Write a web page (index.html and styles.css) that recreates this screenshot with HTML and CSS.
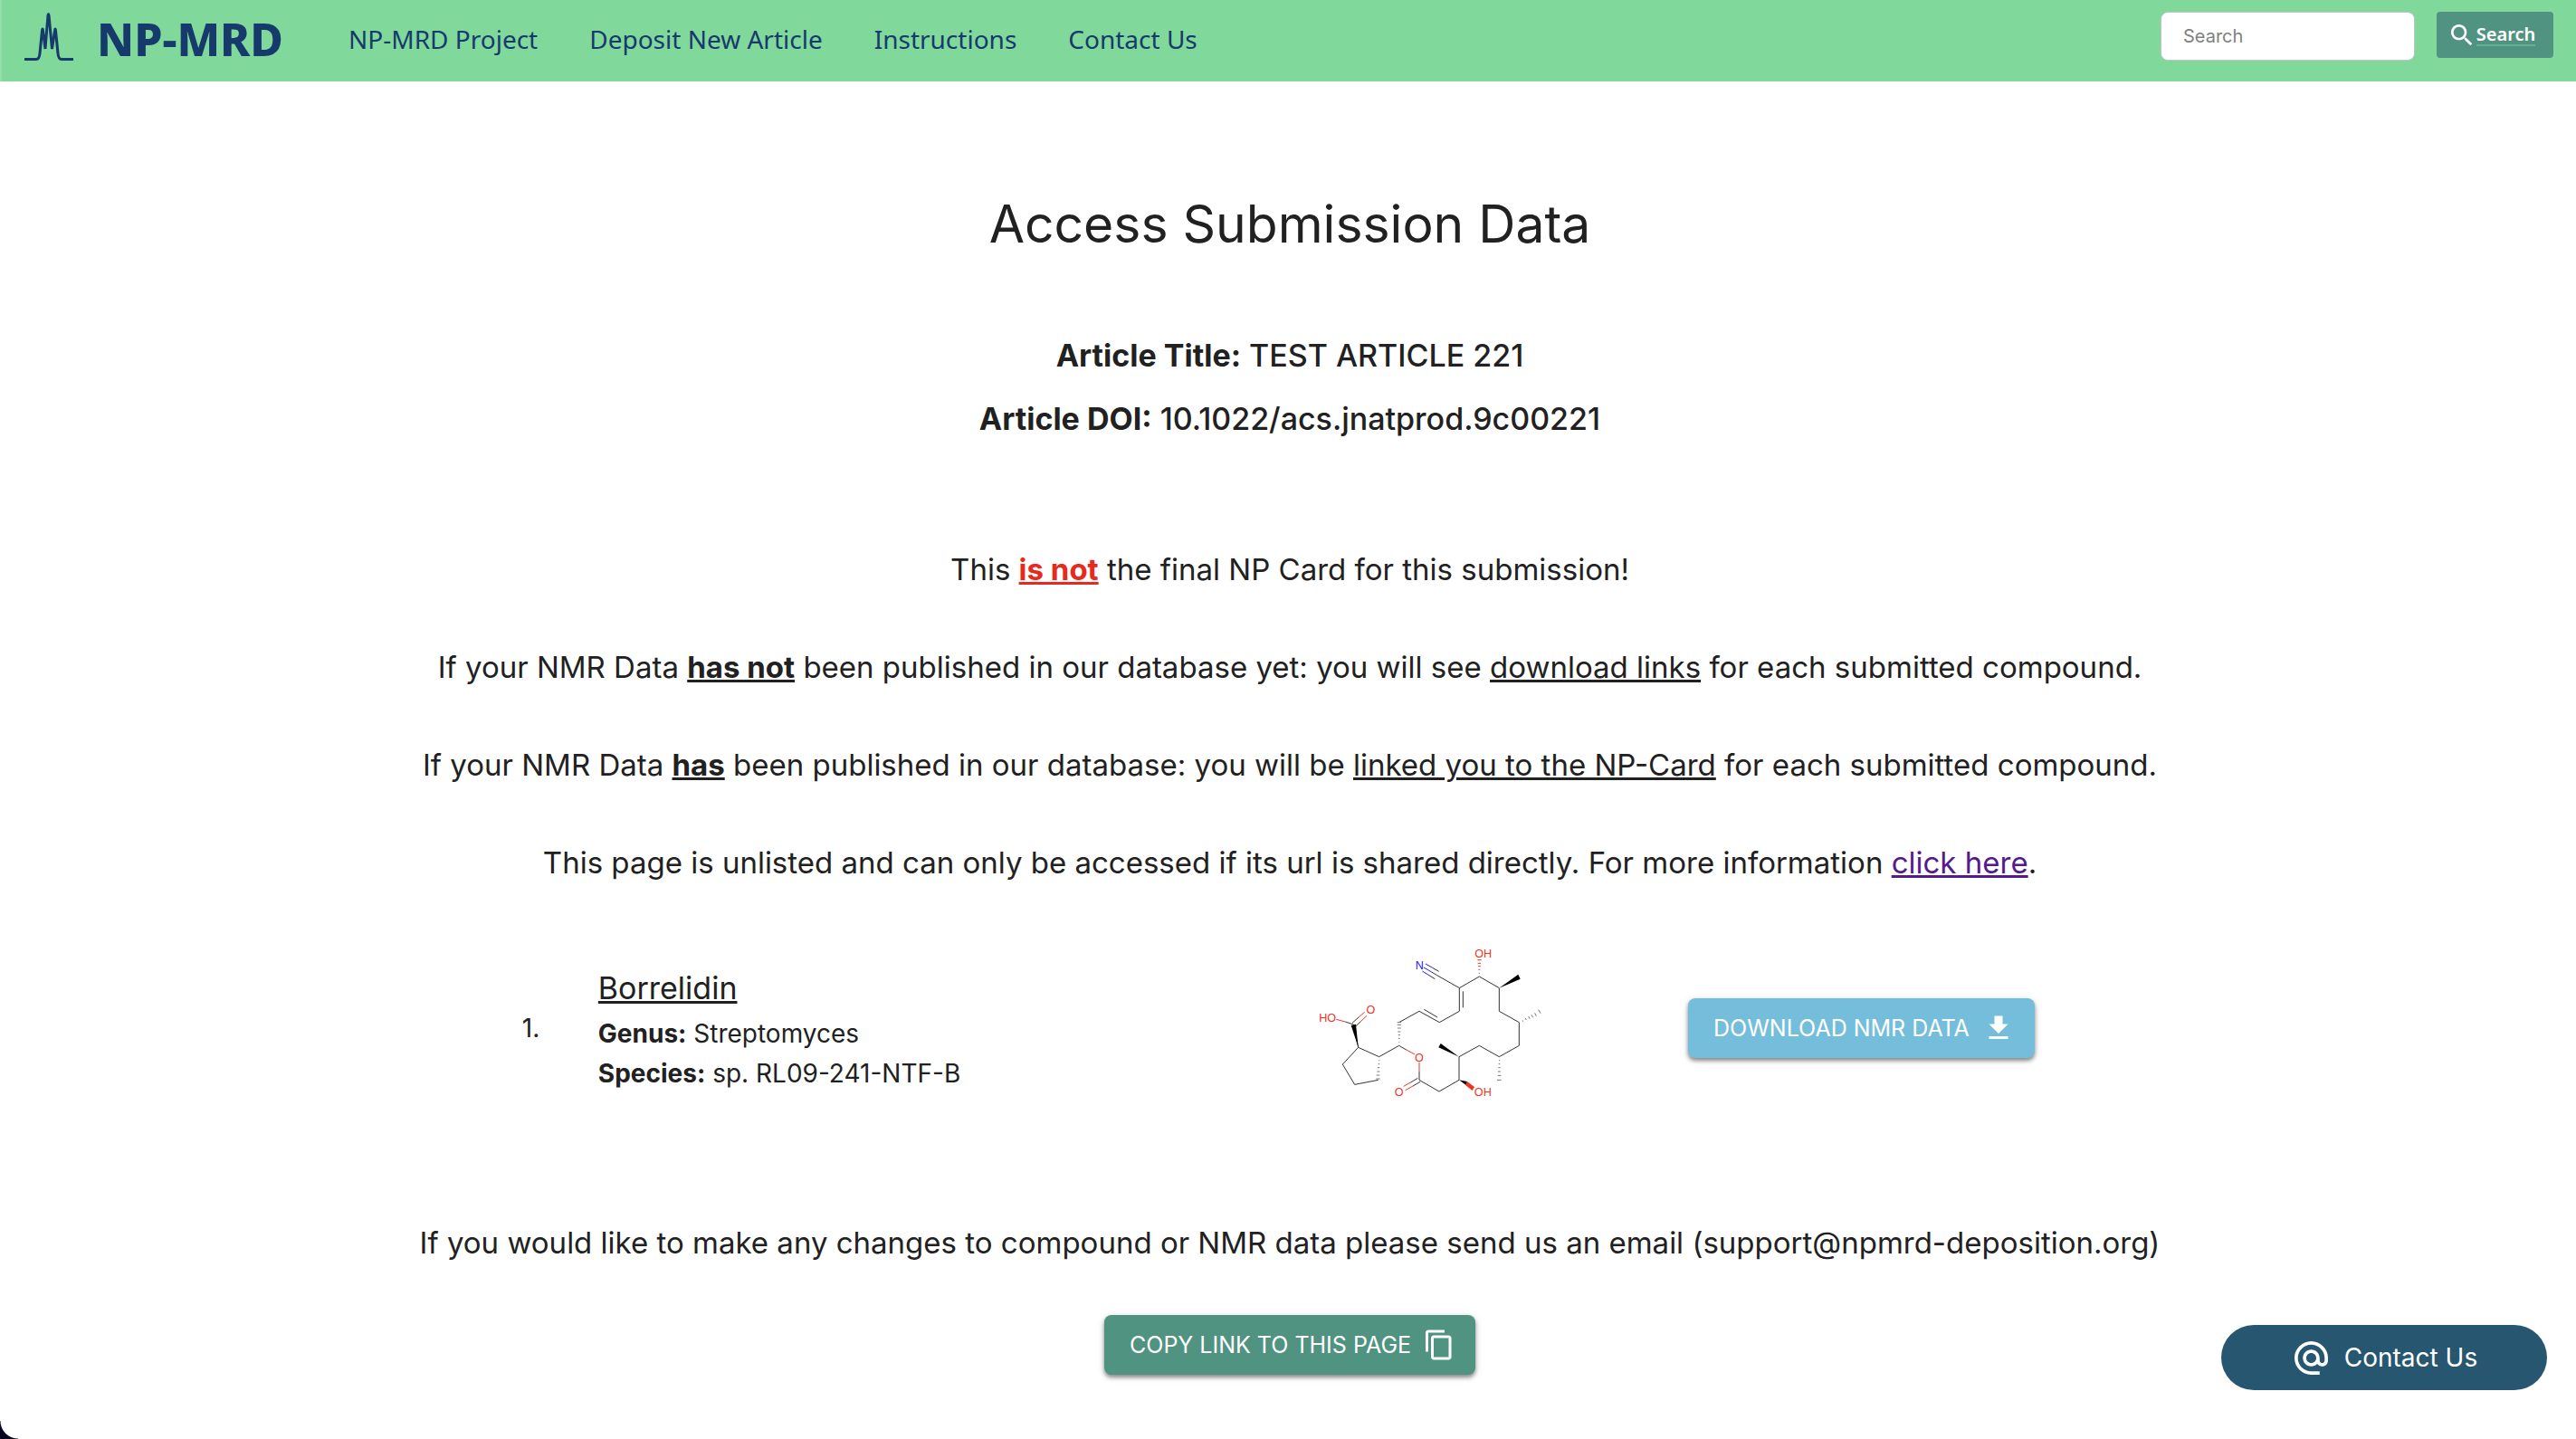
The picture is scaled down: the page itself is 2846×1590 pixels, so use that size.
FILE: index.html
```html
<!DOCTYPE html>
<html lang="en">
<head>
<meta charset="utf-8">
<title>NP-MRD - Access Submission Data</title>
<meta name="viewport" content="width=device-width, initial-scale=1">
<link rel="stylesheet" href="styles.css">
</head>
<body>
<header class="navbar">
  <a class="brand" href="#">
    <svg class="brand-logo" viewBox="0 0 54 54" aria-hidden="true"><path d="M0 51.500H13Q16.500 51.500 17 45L19.500 20Q20 16 20.500 20L23 40L26 3Q26.500 0 27 3L30.500 40L33.500 20Q34 16 34.500 20L37 45Q37.500 51.500 41 51.500H54"/></svg>
    <span class="brand-name">NP-MRD</span>
  </a>
  <nav class="menu">
    <a href="#">NP-MRD Project</a>
    <a href="#">Deposit New Article</a>
    <a href="#">Instructions</a>
    <a href="#">Contact Us</a>
  </nav>
  <form class="search">
    <input class="search-input" type="text" placeholder="Search" aria-label="Search">
    <button class="search-button" type="button">
      <svg viewBox="3 3 18 18" aria-hidden="true"><path d="M15.500 14h-.79l-.28-.27C15.410 12.590 16 11.110 16 9.500 16 5.910 13.090 3 9.500 3S3 5.910 3 9.500 5.910 16 9.500 16c1.610 0 3.090-.59 4.230-1.570l.27.28v.79l5 4.990L20.490 19l-4.990-5zm-6 0C7.010 14 5 11.990 5 9.500S7.010 5 9.500 5 14 7.010 14 9.500 11.990 14 9.500 14z"/></svg>
      <span>Search</span>
    </button>
  </form>
</header>

<main class="page">
  <h1>Access Submission Data</h1>

  <section class="article">
    <p><b>Article Title:</b> TEST ARTICLE 221</p>
    <p><b>Article DOI:</b> 10.1022/acs.jnatprod.9c00221</p>
  </section>

  <section class="notes">
    <p>This <b class="warning">is not</b> the final NP Card for this submission!</p>
    <p>If your NMR Data <b><u>has not</u></b> been published in our database yet: you will see <u>download links</u> for each submitted compound.</p>
    <p>If your NMR Data <b><u>has</u></b> been published in our database: you will be <u>linked you to the NP-Card</u> for each submitted compound.</p>
    <p>This page is unlisted and can only be accessed if its url is shared directly. For more information <a href="#">click here</a>.</p>
  </section>

  <section class="compound">
    <span class="compound-index">1.</span>
    <div class="compound-info">
      <h2>Borrelidin</h2>
      <p><b>Genus:</b> Streptomyces</p>
      <p><b>Species:</b> sp. RL09-241-NTF-B</p>
    </div>
    <svg class="structure" viewBox="0 0 900 690" role="img" aria-label="Structure of borrelidin">
      <g class="bond">
        <path d="M550 212L616 174L682 212V289L748 326V403L682 440L616 403L549 440V517L483 555L417 517"/>
        <path d="M550 212V289L484 326L417 289L350 326M562 223V277M477 309L433 283M350 403L284 440L215 409L163 465L203 532L281 517"/>
        <path d="M550 212L476 170L458 159M482 157L461 145M469 182L453 172M215 409L199 333L172 324M195 328L216 309M206 339L224 322M350 403L376 418M417 517V487M412 511L390 524M420 523L396 537"/>
      </g>
      <g class="bond red"><path d="M172 324L142 316M216 309L236 292M224 322L243 304M376 418L402 432M417 487V458M390 524L365 538M396 537L371 551"/></g>
      <g class="bond blue"><path d="M461 145L438 132M458 159L432 144M453 172L427 156"/></g>
      <path d="M682 212L745 167L752 182ZM215 409L191 336L207 332ZM549 440L481 409L488 396Z"/>
      <path d="M549 517L576 522L572 534Z"/>
      <path class="fill-red" d="M576 522L600 540L593 552L570 534Z"/>
      <g class="bond hash">
        <path d="M349 391h3M348 379h5M347 368h7M346 357h9M345 345h11M344 334h13M344 326h13"/>
        <path d="M283 452h3M281 464h5M279 476h7M277 489h9M275 501h11M274 513h13"/>
        <path d="M681 452h3M680 464h5M679 476h7M678 489h9M677 502h11M675 517h14"/>
        <path d="M759 319l2 4M769 312l3 6M779 306l4 8M789 301l5 9M800 295l5 10M812 284l7 12"/>
        <path d="M614 163h4M613 151h6"/>
      </g>
      <path class="bond red" d="M612 140h8M611 130h10M610 119h13"/>
      <g class="atom">
        <text x="629" y="111">OH</text><text x="113" y="325">HO</text><text x="256" y="297">O</text><text x="417" y="455">O</text><text x="350" y="569">O</text><text x="628" y="570">OH</text>
        <text class="nitrogen" x="418" y="149">N</text>
      </g>
    </svg>
    <button class="button download" type="button">DOWNLOAD NMR DATA
      <svg viewBox="0 0 24 24" aria-hidden="true"><path d="M19 9h-4V3H9v6H5l7 7 7-7zM5 18v2h14v-2H5z"/></svg>
    </button>
  </section>

  <p class="changes">If you would like to make any changes to compound or NMR data please send us an email (support@npmrd-deposition.org)</p>
  <button class="button copy" type="button">COPY LINK TO THIS PAGE
    <svg viewBox="0 0 24 24" aria-hidden="true"><path d="M16 1H4c-1.100 0-2 .9-2 2v14h2V3h12V1zm3 4H8c-1.100 0-2 .9-2 2v14c0 1.100.9 2 2 2h11c1.100 0 2-.9 2-2V7c0-1.100-.9-2-2-2zm0 16H8V7h11v14z"/></svg>
  </button>
</main>

<button class="contact" type="button">
  <svg viewBox="2 2 20 20" aria-hidden="true"><path d="M12 2C6.480 2 2 6.480 2 12s4.480 10 10 10h5v-2h-5c-4.340 0-8-3.660-8-8s3.660-8 8-8 8 3.660 8 8v1.430c0 .79-.71 1.570-1.500 1.570s-1.500-.78-1.500-1.570V12c0-2.760-2.240-5-5-5s-5 2.240-5 5 2.240 5 5 5c1.380 0 2.640-.56 3.540-1.470.65.89 1.770 1.470 2.960 1.470 1.970 0 3.500-1.600 3.500-3.570V12c0-5.520-4.480-10-10-10zm0 13c-1.660 0-3-1.340-3-3s1.340-3 3-3 3 1.340 3 3-1.340 3-3 3z"/></svg>
  Contact Us
</button>
<div class="window-corner"></div>
</body>
</html>
```
FILE: styles.css
```css
* { box-sizing: border-box; }
body {
  margin: 0;
  background: #fff;
  color: #212121;
  font-family: Inter, "Liberation Sans", sans-serif;
  font-size: 33px;
  line-height: 44px;
}
h1, h2, p { margin: 0; font-weight: 400; }
button, input { font-family: inherit; border: 0; }
button { cursor: pointer; }
svg { display: block; flex: none; }

/* Navigation bar */
.navbar {
  display: flex;
  align-items: center;
  height: 90px;
  padding: 0 25px 4px;
  background: #80d89b;
  border-left: 2px solid #93dfab;
  font-family: "Noto Sans", sans-serif;
}
.brand {
  display: flex;
  align-items: center;
  gap: 26px;
  color: #153a6b;
  text-decoration: none;
}
.brand-logo {
  width: 54px;
  height: 54px;
  margin-bottom: 4px;
  overflow: visible;
  fill: none;
  stroke: #153a6b;
  stroke-width: 3;
}
.brand-name { font-size: 50px; font-weight: 800; }
.menu { display: flex; gap: 57px; margin-left: 72px; }
.menu a { color: #153a6b; font-size: 28px; text-decoration: none; }
.search {
  display: flex;
  align-items: flex-start;
  gap: 24px;
  height: 60px;
  margin-left: auto;
}
.search-input {
  width: 281px;
  height: 54px;
  padding: 0 24px;
  background: #fff;
  border: 1px solid #c4c4c4;
  border-radius: 8px;
  font-family: Inter, sans-serif;
  font-size: 20px;
}
.search-input::placeholder { color: #808080; opacity: 1; }
.search-button {
  display: flex;
  align-items: center;
  justify-content: center;
  gap: 4px;
  width: 129px;
  height: 51px;
  padding: 0 4px 0 0;
  background: #519381;
  border-radius: 4px;
  color: #fff;
  font-size: 20px;
  font-weight: 600;
  line-height: 22px;
}
.search-button svg { width: 24px; height: 24px; fill: #fff; }
.search-button span { border-bottom: 2px solid #64b191; }

/* Submission page */
.page {
  display: flex;
  flex-direction: column;
  align-items: center;
  padding: 118px 24px 72px 28px;
  text-align: center;
}
h1 { font-size: 57px; line-height: 80px; }
.article {
  display: grid;
  gap: 26px;
  margin-top: 83px;
  font-size: 34px;
}
.article p { font-weight: 500; }
.notes { display: grid; gap: 64px; margin-top: 122px; }
.notes a { color: #551a8b; }
.notes u, .notes a, .warning {
  text-decoration: underline;
  text-decoration-thickness: 3px;
}
.notes .warning { color: #e8291c; }

.compound {
  display: grid;
  grid-template-columns: 84fr 768fr 436fr 408fr;
  align-items: center;
  width: 61%;
  margin-top: 46px;
  padding: 0 4px;
  font-size: 28px;
  text-align: left;
}
.compound h2 {
  font-size: 34px;
  line-height: 56px;
  text-decoration: underline;
  text-decoration-thickness: 3px;
}
.structure { width: 300px; height: 230px; }
.bond { fill: none; stroke: #333; stroke-width: 3; }
.hash { stroke: #777; }
.red { stroke: #ee3427; }
.blue { stroke: #2020ff; }
.fill-red { fill: #ee3427; }
.atom {
  fill: #ee3427;
  font-family: "Liberation Sans", sans-serif;
  font-size: 38px;
  text-anchor: middle;
}
.nitrogen { fill: #2020ff; }

.button {
  display: flex;
  align-items: center;
  justify-content: space-between;
  height: 66px;
  padding: 0 22px 0 28px;
  border-radius: 8px;
  box-shadow: 0 3px 4px rgba(0, 0, 0, .4), 0 2px 10px rgba(0, 0, 0, .14);
  color: #fff;
  font-size: 25px;
  white-space: nowrap;
}
.button svg { width: 36px; height: 36px; fill: #fff; }
.download { width: 383px; background: #74bedc; }
.copy { width: 410px; margin-top: 58px; background: #519381; }
.changes { margin-top: 100px; }

/* Floating contact button */
.contact {
  position: fixed;
  right: 32px;
  bottom: 54px;
  display: flex;
  align-items: center;
  justify-content: center;
  gap: 18px;
  width: 360px;
  height: 72px;
  padding: 0 4px 0 8px;
  background: #275770;
  border-radius: 36px;
  color: #fff;
  font-size: 28px;
}
.contact svg { width: 37px; height: 37px; fill: #fff; }
.window-corner {
  position: fixed;
  left: 0;
  bottom: 0;
  width: 20px;
  height: 20px;
  background: radial-gradient(circle at 100% 0, transparent 19px, #0b0620 20px);
}
```
